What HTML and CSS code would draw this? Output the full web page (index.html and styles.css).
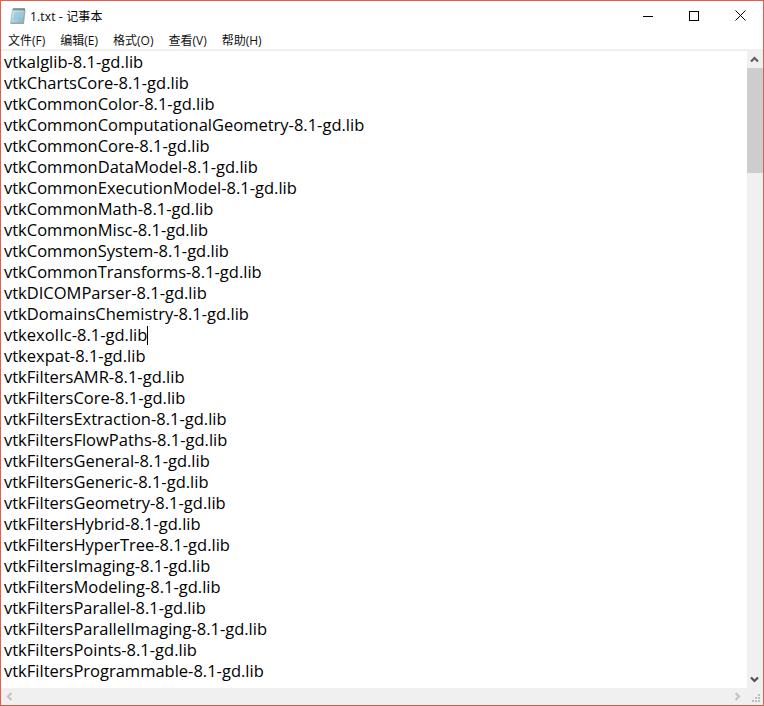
FILE: index.html
```html
<!DOCTYPE html>
<html lang="zh">
<head>
<meta charset="utf-8">
<title>1.txt - 记事本</title>
<link rel="stylesheet" href="styles.css">
</head>
<body>
<div class="window">
  <header class="titlebar">
    <svg class="app-icon" width="18" height="18" viewBox="0 0 18 18">
      <defs>
        <linearGradient id="pad" x1="0" y1="0" x2="1" y2="1">
          <stop offset="0" stop-color="#e3f1f6"/>
          <stop offset="0.55" stop-color="#a9d3e2"/>
          <stop offset="1" stop-color="#6fb0c8"/>
        </linearGradient>
      </defs>
      <path d="M4 3h12.500l-1.500 14H1.500z" fill="#b9a47c"/>
      <path d="M3.500 2h12l-1.500 14H1.500z" fill="url(#pad)" stroke="#7fa9ba" stroke-width=".6"/>
      <path d="M5 6h8M4.800 8h8M4.600 10h8M4.400 12h8" stroke="#8dbdd0" fill="none"/>
      <path d="M5 1v2.500M7 1v2.500M9 1v2.500M11 1v2.500M13 1v2.500M15 1v2.500" stroke="#3f5560" fill="none"/>
    </svg>
    <span class="title">1.txt - 记事本</span>
    <div class="controls">
      <svg class="ctl" width="10" height="10" viewBox="0 0 10 10"><path d="M0 5.500h10" stroke="#000"/></svg>
      <svg class="ctl" width="10" height="10" viewBox="0 0 10 10"><rect x=".5" y=".5" width="9" height="9" fill="none" stroke="#000"/></svg>
      <svg class="ctl" width="11" height="11" viewBox="0 0 11 11"><path d="M.5.5l10 10M10.500.5l-10 10" stroke="#000" fill="none"/></svg>
    </div>
  </header>
  <nav class="menubar">
    <span>文件(F)</span><span>编辑(E)</span><span>格式(O)</span><span>查看(V)</span><span>帮助(H)</span>
  </nav>
  <main class="client">
    <div class="editor">
      <div>vtkalglib-8.1-gd.lib</div>
      <div>vtkChartsCore-8.1-gd.lib</div>
      <div>vtkCommonColor-8.1-gd.lib</div>
      <div>vtkCommonComputationalGeometry-8.1-gd.lib</div>
      <div>vtkCommonCore-8.1-gd.lib</div>
      <div>vtkCommonDataModel-8.1-gd.lib</div>
      <div>vtkCommonExecutionModel-8.1-gd.lib</div>
      <div>vtkCommonMath-8.1-gd.lib</div>
      <div>vtkCommonMisc-8.1-gd.lib</div>
      <div>vtkCommonSystem-8.1-gd.lib</div>
      <div>vtkCommonTransforms-8.1-gd.lib</div>
      <div>vtkDICOMParser-8.1-gd.lib</div>
      <div>vtkDomainsChemistry-8.1-gd.lib</div>
      <div>vtkexoIIc-8.1-gd.lib<span class="caret"></span></div>
      <div>vtkexpat-8.1-gd.lib</div>
      <div>vtkFiltersAMR-8.1-gd.lib</div>
      <div>vtkFiltersCore-8.1-gd.lib</div>
      <div>vtkFiltersExtraction-8.1-gd.lib</div>
      <div>vtkFiltersFlowPaths-8.1-gd.lib</div>
      <div>vtkFiltersGeneral-8.1-gd.lib</div>
      <div>vtkFiltersGeneric-8.1-gd.lib</div>
      <div>vtkFiltersGeometry-8.1-gd.lib</div>
      <div>vtkFiltersHybrid-8.1-gd.lib</div>
      <div>vtkFiltersHyperTree-8.1-gd.lib</div>
      <div>vtkFiltersImaging-8.1-gd.lib</div>
      <div>vtkFiltersModeling-8.1-gd.lib</div>
      <div>vtkFiltersParallel-8.1-gd.lib</div>
      <div>vtkFiltersParallelImaging-8.1-gd.lib</div>
      <div>vtkFiltersPoints-8.1-gd.lib</div>
      <div>vtkFiltersProgrammable-8.1-gd.lib</div>
    </div>
    <div class="vscroll">
      <svg width="17" height="17" viewBox="0 0 17 17"><path d="M5 10.500L8.500 7L12 10.500" fill="none" stroke="#606060" stroke-width="2.200"/></svg>
      <div class="vtrack"><div class="vthumb"></div></div>
      <svg width="17" height="17" viewBox="0 0 17 17"><path d="M5 6.500L8.500 10L12 6.500" fill="none" stroke="#505050" stroke-width="2.200"/></svg>
    </div>
  </main>
  <div class="hscroll">
    <svg width="17" height="17" viewBox="0 0 17 17"><path d="M10.500 5L7 8.500L10.500 12" fill="none" stroke="#c4c4c4" stroke-width="2.200"/></svg>
    <div class="htrack"></div>
    <svg width="17" height="17" viewBox="0 0 17 17"><path d="M6.500 5L10 8.500L6.500 12" fill="none" stroke="#c4c4c4" stroke-width="2.200"/></svg>
    <svg class="grip" width="17" height="17" viewBox="0 0 17 17"><path d="M12 6h2v2h-2zM9 9h2v2H9zM12 9h2v2h-2zM6 12h2v2H6zM9 12h2v2H9zM12 12h2v2h-2z" fill="#bdbdbd"/></svg>
  </div>
</div>
</body>
</html>
```

FILE: styles.css
```css
html, body {
  margin: 0;
  padding: 0;
  background: #fff;
}
.window {
  width: 764px;
  height: 706px;
  box-sizing: border-box;
  border: 1px solid #e0604f;
  border-bottom-color: #c8604e;
  display: flex;
  flex-direction: column;
  background: #fff;
  font-family: "Open Sans", "Noto Sans CJK SC", sans-serif;
  overflow: hidden;
}
.titlebar {
  height: 29px;
  flex: none;
  display: flex;
  align-items: center;
  padding-left: 8px;
}
.title {
  margin-left: 3px;
  font-size: 12px;
  letter-spacing: 0.15px;
  color: #000;
}
.controls {
  margin-left: auto;
  display: flex;
  align-items: center;
  gap: 36px;
  padding-right: 17px;
}
.menubar {
  height: 19px;
  flex: none;
  display: flex;
  gap: 15px;
  padding-left: 7px;
  align-items: center;
  font-size: 12px;
  color: #111;
}
.client {
  flex: 1;
  min-height: 0;
  display: flex;
  border-top: 2px solid #f0f0f0;
}
.editor {
  flex: 1;
  min-width: 0;
  padding: 0 0 0 3px;
  font-family: "Open Sans", sans-serif;
  font-size: 16.5px;
  line-height: 21px;
  color: #000;
  overflow: hidden;
  white-space: nowrap;
}
.caret {
  display: inline-block;
  width: 1px;
  height: 19px;
  background: #000;
  vertical-align: -4px;
}
.vscroll {
  width: 16px;
  flex: none;
  display: flex;
  flex-direction: column;
  background: #f0f0f0;
}
.vscroll svg {
  margin-left: -1px;
}
.vtrack {
  flex: 1;
}
.vthumb {
  height: 105px;
  background: #cdcdcd;
}
.hscroll {
  height: 17px;
  flex: none;
  display: flex;
  background: #f0f0f0;
}
.htrack {
  flex: 1;
}
.grip {
  flex: none;
}
```
